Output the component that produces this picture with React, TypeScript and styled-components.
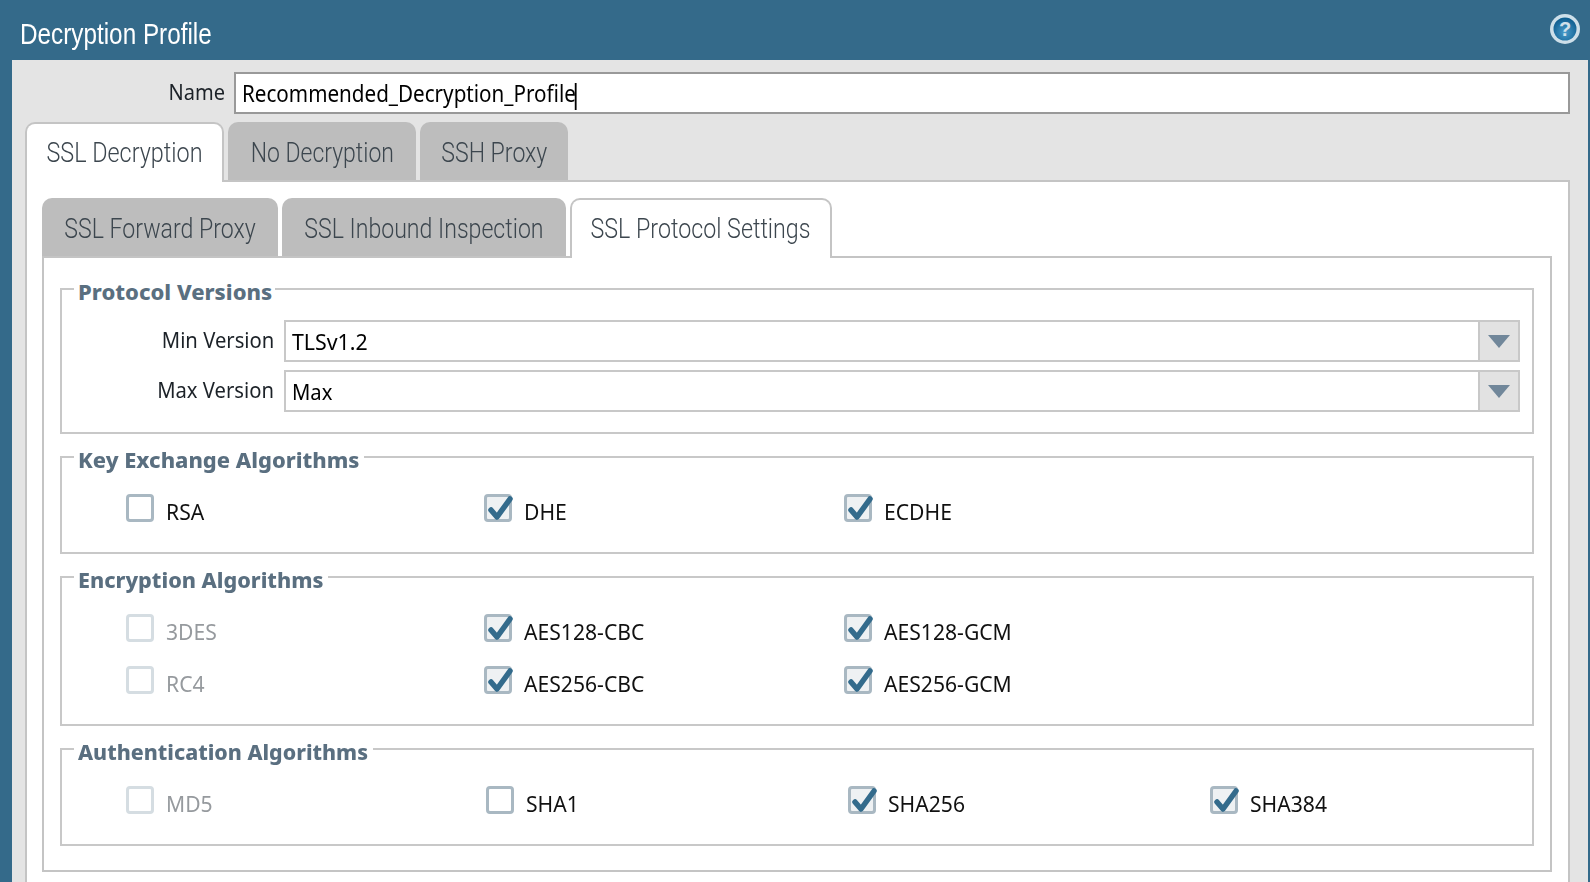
import React from 'react'
import styled, { createGlobalStyle } from 'styled-components'

const GlobalStyle = createGlobalStyle`
  html, body {
    margin: 0;
    height: 100%;
    overflow: hidden;
    background: #346a8a;
  }
`

const Squeeze = styled.span<{ $scale: number; $origin?: string }>`
  display: inline-block;
  white-space: nowrap;
  transform: scaleX(${({ $scale }) => $scale});
  transform-origin: ${({ $origin }) => $origin ?? 'left'} center;
`

const Page = styled.div`
  width: 1590px;
  height: 882px;
  overflow: hidden;
  background: #346a8a;
  font-family: "Noto Sans", "Liberation Sans", sans-serif;
`

const Header = styled.header`
  height: 60px;
  display: flex;
  align-items: center;
  justify-content: space-between;
  padding: 0 9px 0 20px;
  box-sizing: border-box;
`

const Title = styled.h1`
  margin: 7px 0 0;
  color: #fff;
  font: 400 30px "Liberation Sans", sans-serif;
`

const HelpSvg = styled.svg`
  width: 32px;
  height: 32px;
  margin-top: -3px;
`

const HelpMark = styled.text`
  font: 700 20px "Liberation Sans", sans-serif;
  fill: #cfe0ea;
  text-anchor: middle;
`

const Panel = styled.main`
  margin: 0 2px 0 12px;
  padding: 12px 18px 0 13px;
  height: 822px;
  box-sizing: border-box;
  background: #e4e4e4;
`

const NameRow = styled.div`
  display: flex;
  align-items: center;
  height: 42px;
  margin-bottom: 8px;
`

const NameLabel = styled.label`
  width: 200px;
  margin-right: 9px;
  padding-bottom: 5px;
  text-align: right;
  font-size: 22px;
  color: #1c2228;
`

const NameInput = styled.div`
  flex: 1;
  height: 42px;
  box-sizing: border-box;
  border: 2px solid #999;
  background: #fff;
  padding: 1px 0 0 6px;
  display: flex;
  align-items: center;
  font-size: 23px;
  color: #000;
`

const Caret = styled.span`
  display: inline-block;
  width: 2px;
  height: 27px;
  margin-left: -1px;
  vertical-align: middle;
  background: #000;
`

const TabBar = styled.div`
  display: flex;
  align-items: flex-end;
  position: relative;
  z-index: 1;
`

const Tab = styled.div<{ $width: number; $active?: boolean; $gap: number }>`
  width: ${({ $width }) => $width}px;
  margin-right: ${({ $gap }) => $gap}px;
  height: ${({ $active }) => ($active ? 60 : 58)}px;
  box-sizing: border-box;
  display: flex;
  align-items: center;
  justify-content: center;
  padding: ${({ $active }) => ($active ? '0 0 2px' : '3px 0 0')};
  border-radius: 10px 10px 0 0;
  background: ${({ $active }) => ($active ? '#fff' : '#bdbdbd')};
  border: ${({ $active }) => ($active ? '2px solid #c4c4c4' : 'none')};
  border-bottom: none;
  margin-bottom: ${({ $active }) => ($active ? '-2px' : '0')};
  font: 300 28px Roboto, "Liberation Sans", sans-serif;
  color: #3c464e;
`

const OuterBody = styled.div`
  background: #fff;
  border: 2px solid #c4c4c4;
  padding: 16px 16px 0 15px;
  height: 760px;
  box-sizing: border-box;
`

const InnerBody = styled.div`
  border: 2px solid #c4c4c4;
  padding: 16px 16px 24px;
  display: flex;
  flex-direction: column;
  gap: 8px;
`

const Group = styled.fieldset`
  margin: 0;
  min-width: 0;
  border: 2px solid #c8c8c8;
  padding: 0;
`

const Legend = styled.legend<{ $width: number }>`
  width: ${({ $width }) => $width}px;
  margin-left: 12px;
  padding: 0 0 0 4px;
  box-sizing: border-box;
  height: 30px;
  line-height: 34px;
  font-size: 22px;
  font-weight: 800;
  color: #5a6f80;
`

const SelectList = styled.div`
  padding: 16px 12px 20px 0;
`

const SelectRow = styled.div`
  display: flex;
  align-items: center;
  height: 42px;
  & + & {
    margin-top: 8px;
  }
`

const SelectLabel = styled.label`
  width: 212px;
  margin-right: 10px;
  padding-bottom: 4px;
  text-align: right;
  font-size: 22px;
  color: #1c2228;
`

const Select = styled.div`
  flex: 1;
  height: 42px;
  box-sizing: border-box;
  border: 2px solid #c8c8c8;
  display: flex;
  align-items: stretch;
`

const SelectValue = styled.div`
  flex: 1;
  display: flex;
  align-items: center;
  padding-left: 6px;
  font-size: 22px;
  color: #000;
`

const SelectButton = styled.div`
  width: 38px;
  border-left: 2px solid #c8c8c8;
  background: #e2e2e2;
  display: flex;
  align-items: center;
  justify-content: center;
`

const CheckGrid = styled.div<{ $columns: string }>`
  display: grid;
  grid-template-columns: ${({ $columns }) => $columns};
  row-gap: 24px;
  padding: 22px 12px 30px 64px;
`

const CheckItem = styled.div`
  display: flex;
  align-items: center;
  height: 28px;
`

const Box = styled.span<{ $disabled?: boolean; $checked?: boolean }>`
  width: 28px;
  height: 28px;
  flex: none;
  box-sizing: border-box;
  border: 3px solid ${({ $disabled }) => ($disabled ? '#d5dde2' : '#a9b8c2')};
  border-radius: 4px;
  background: ${({ $checked }) => ($checked ? '#eef1f3' : '#fff')};
  position: relative;
`

const CheckSvg = styled.svg`
  position: absolute;
  left: -3px;
  top: -3px;
  width: 30px;
  height: 28px;
`

const CheckLabel = styled.span<{ $disabled?: boolean }>`
  margin: 6px 0 0 12px;
  font-size: 22px;
  color: ${({ $disabled }) => ($disabled ? '#969a9e' : '#111')};
`

const Arrow = () => (
  <svg width="22" height="13" viewBox="0 0 22 13">
    <path d="M0 0 H22 L11 13 Z" fill="#71879a" />
  </svg>
)

const HelpIcon = () => (
  <HelpSvg viewBox="0 0 32 32">
    <defs>
      <radialGradient id="help-fill" cx="50%" cy="65%" r="60%">
        <stop offset="0%" stopColor="#4a9ccb" />
        <stop offset="100%" stopColor="#0f5f91" />
      </radialGradient>
      <filter id="help-soft">
        <feGaussianBlur stdDeviation="0.6" />
      </filter>
    </defs>
    <circle cx="16" cy="16" r="15" fill="#cddfe9" filter="url(#help-soft)" />
    <circle cx="16" cy="16" r="11.5" fill="url(#help-fill)" filter="url(#help-soft)" />
    <HelpMark x="16" y="23">?</HelpMark>
  </HelpSvg>
)

interface CheckProps {
  label: string
  checked?: boolean
  disabled?: boolean
}

const Check = ({ label, checked = false, disabled = false }: CheckProps) => (
  <CheckItem>
    <Box $checked={checked} $disabled={disabled}>
      {checked && (
        <CheckSvg viewBox="0 0 30 28">
          <path d="M7 16 L13 23 L26 5" fill="none" stroke="#336b8c" strokeWidth="5.5" strokeLinecap="round" strokeLinejoin="round" />
        </CheckSvg>
      )}
    </Box>
    <CheckLabel $disabled={disabled}>
      <Squeeze $scale={0.96}>{label}</Squeeze>
    </CheckLabel>
  </CheckItem>
)

const App = () => (
  <Page>
    <GlobalStyle />
    <Header>
      <Title><Squeeze $scale={0.81}>Decryption Profile</Squeeze></Title>
      <HelpIcon />
    </Header>
    <Panel>
      <NameRow>
        <NameLabel><Squeeze $scale={0.91} $origin="right">Name</Squeeze></NameLabel>
        <NameInput>
          <Squeeze $scale={0.897}>Recommended_Decryption_Profile<Caret /></Squeeze>
        </NameInput>
      </NameRow>
      <TabBar>
        <Tab $width={199} $gap={4} $active><Squeeze $scale={0.835} $origin="center">SSL Decryption</Squeeze></Tab>
        <Tab $width={188} $gap={4}><Squeeze $scale={0.82} $origin="center">No Decryption</Squeeze></Tab>
        <Tab $width={148} $gap={0}><Squeeze $scale={0.825} $origin="center">SSH Proxy</Squeeze></Tab>
      </TabBar>
      <OuterBody>
        <TabBar>
          <Tab $width={236} $gap={4}><Squeeze $scale={0.825} $origin="center">SSL Forward Proxy</Squeeze></Tab>
          <Tab $width={284} $gap={4}><Squeeze $scale={0.825} $origin="center">SSL Inbound Inspection</Squeeze></Tab>
          <Tab $width={262} $gap={0} $active><Squeeze $scale={0.83} $origin="center">SSL Protocol Settings</Squeeze></Tab>
        </TabBar>
        <InnerBody>
          <Group>
            <Legend $width={201}><Squeeze $scale={1}>Protocol Versions</Squeeze></Legend>
            <SelectList>
              <SelectRow>
                <SelectLabel><Squeeze $scale={0.92} $origin="right">Min Version</Squeeze></SelectLabel>
                <Select>
                  <SelectValue><Squeeze $scale={0.97}>TLSv1.2</Squeeze></SelectValue>
                  <SelectButton><Arrow /></SelectButton>
                </Select>
              </SelectRow>
              <SelectRow>
                <SelectLabel><Squeeze $scale={0.92} $origin="right">Max Version</Squeeze></SelectLabel>
                <Select>
                  <SelectValue><Squeeze $scale={0.92}>Max</Squeeze></SelectValue>
                  <SelectButton><Arrow /></SelectButton>
                </Select>
              </SelectRow>
            </SelectList>
          </Group>
          <Group>
            <Legend $width={290}><Squeeze $scale={0.995}>Key Exchange Algorithms</Squeeze></Legend>
            <CheckGrid $columns="358px 360px 1fr">
              <Check label="RSA" />
              <Check label="DHE" checked />
              <Check label="ECDHE" checked />
            </CheckGrid>
          </Group>
          <Group>
            <Legend $width={254}><Squeeze $scale={0.98}>Encryption Algorithms</Squeeze></Legend>
            <CheckGrid $columns="358px 360px 1fr">
              <Check label="3DES" disabled />
              <Check label="AES128-CBC" checked />
              <Check label="AES128-GCM" checked />
              <Check label="RC4" disabled />
              <Check label="AES256-CBC" checked />
              <Check label="AES256-GCM" checked />
            </CheckGrid>
          </Group>
          <Group>
            <Legend $width={299}><Squeeze $scale={0.97}>Authentication Algorithms</Squeeze></Legend>
            <CheckGrid $columns="360px 362px 362px 1fr">
              <Check label="MD5" disabled />
              <Check label="SHA1" />
              <Check label="SHA256" checked />
              <Check label="SHA384" checked />
            </CheckGrid>
          </Group>
        </InnerBody>
      </OuterBody>
    </Panel>
  </Page>
)

export default App
